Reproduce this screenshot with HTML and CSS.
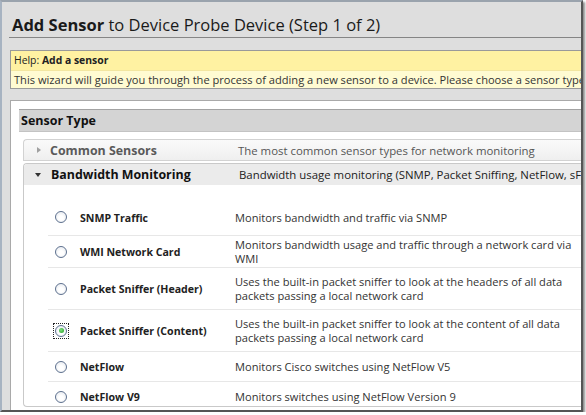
FILE: index.html
```html
<!DOCTYPE html>
<html>
<head>
<meta charset="utf-8">
<link rel="stylesheet" href="styles.css">
</head>
<body>
<div class="window">
  <div class="content">
    <h1 class="title"><b>Add Sensor</b> to Device Probe Device (Step 1 of 2)</h1>
    <div class="help">
      <div class="help-head">Help: <b>Add a sensor</b></div>
      <div class="help-body">This wizard will guide you through the process of adding a new sensor to a device. Please choose a sensor type from the list below.</div>
    </div>
    <div class="panel">
      <div class="panel-head">Sensor Type</div>
      <div class="group group-collapsed">
        <span class="arrow arrow-right"></span>
        <span class="group-name">Common Sensors</span>
        <span class="group-desc">The most common sensor types for network monitoring</span>
      </div>
      <div class="group-box">
        <div class="group group-open">
          <span class="arrow arrow-down"></span>
          <span class="group-name">Bandwidth Monitoring</span>
          <span class="group-desc">Bandwidth usage monitoring (SNMP, Packet Sniffing, NetFlow, sFlow)</span>
        </div>
        <div class="list">
          <div class="row row-first">
            <span class="radio"></span>
            <span class="name">SNMP Traffic</span>
            <span class="desc">Monitors bandwidth and traffic via SNMP</span>
          </div>
          <div class="row row-wmi">
            <span class="radio"></span>
            <span class="name">WMI Network Card</span>
            <span class="desc">Monitors bandwidth usage and traffic through a network card via WMI</span>
          </div>
          <div class="row row-two">
            <span class="radio"></span>
            <span class="name">Packet Sniffer (Header)</span>
            <span class="desc">Uses the built-in packet sniffer to look at the headers of all data packets passing a local network card</span>
          </div>
          <div class="row row-two">
            <span class="radio radio-checked"></span>
            <span class="name">Packet Sniffer (Content)</span>
            <span class="desc">Uses the built-in packet sniffer to look at the content of all data packets passing a local network card</span>
          </div>
          <div class="row">
            <span class="radio"></span>
            <span class="name">NetFlow</span>
            <span class="desc">Monitors Cisco switches using NetFlow V5</span>
          </div>
          <div class="row">
            <span class="radio"></span>
            <span class="name">NetFlow V9</span>
            <span class="desc">Monitors switches using NetFlow Version 9</span>
          </div>
        </div>
      </div>
    </div>
  </div>
</div>
</body>
</html>
```
FILE: styles.css
```css
html, body {
  margin: 0;
  padding: 0;
  background: #ffffff;
}
body {
  font-family: "Open Sans", "Noto Sans", sans-serif;
  color: #222;
}
.window {
  width: 579px;
  height: 408px;
  border-left: 2px solid #a7b3c1;
  border-top: 2px solid #9aa3ad;
  border-right: 2px solid #555;
  border-bottom: 2px solid #555;
  box-shadow: 2px 2px 2px rgba(0,0,0,0.45);
  background: #dedede;
  overflow: hidden;
}
.content {
  padding-left: 7px;
  width: 640px;
}
.title {
  margin: 0;
  padding: 11px 0 0 3px;
  height: 24px;
  line-height: 24px;
  font-size: 16.5px;
  font-weight: normal;
  color: #1a1a1a;
  border-bottom: 1px solid #858585;
  white-space: nowrap;
}
.title b {
  font-weight: 700;
}
.help {
  margin: 12px 0 0 1px;
  border: 1px solid #9a9a9a;
  white-space: nowrap;
}
.help-head {
  height: 19px;
  line-height: 19px;
  padding-left: 3px;
  font-size: 10.4px;
  background: #fff2a2;
  border-bottom: 1px solid #f3e6a0;
}
.help-body {
  height: 17px;
  line-height: 17px;
  padding-left: 3px;
  font-size: 11.1px;
  background: #fffbd2;
  color: #333;
}
.panel {
  margin: 11px 0 0 1px;
  border: 1px solid #a9a9a9;
  background: #fff;
  padding: 8px 0 0 8px;
  height: 400px;
}
.panel-head {
  height: 21px;
  line-height: 21px;
  border-top: 1px solid #a3a3a3;
  border-bottom: 1px solid #c3c3c3;
  background: #d4d4d4;
  padding-left: 2px;
  font-size: 12.5px;
  font-weight: 700;
  color: #111;
}
.group {
  display: flex;
  align-items: center;
  white-space: nowrap;
}
.group-collapsed {
  margin: 7px 0 0 4px;
  height: 20px;
  border: 1px solid #d2d2d2;
  border-right: none;
  border-radius: 4px 0 0 0;
  background: linear-gradient(#fafafa, #efefef);
}
.group-box {
  margin: 2px 0 0 4px;
  border: 1px solid #c9c9c9;
  border-right: none;
  border-radius: 4px 0 0 4px;
  overflow: hidden;
}
.group-open {
  height: 21px;
  background: #ebebeb;
}
.arrow {
  width: 0;
  height: 0;
  flex: none;
}
.arrow-right {
  margin-left: 13px;
  margin-right: 9px;
  border-top: 3.5px solid transparent;
  border-bottom: 3.5px solid transparent;
  border-left: 4px solid #a0a0a0;
}
.arrow-down {
  margin-left: 11px;
  margin-right: 10px;
  border-left: 3.5px solid transparent;
  border-right: 3.5px solid transparent;
  border-top: 4px solid #333;
}
.group-name {
  width: 188px;
  font-size: 12.4px;
  font-weight: 700;
  flex: none;
}
.group-collapsed .group-name {
  color: #5a5a5a;
}
.group-open .group-name {
  color: #111;
}
.group-desc {
  font-size: 11.4px;
  color: #555;
}
.group-open .group-desc {
  color: #222;
}
.list {
  overflow: hidden;
  padding-top: 12px;
  box-sizing: border-box;
  height: 221px;
}
.row {
  margin-left: 24px;
  height: 29px;
  border-bottom: 1px solid #e7e7e7;
  display: flex;
  align-items: center;
}
.row-first {
  height: 39px;
  align-items: flex-start;
  padding-top: 14px;
  box-sizing: border-box;
}
.row-wmi {
  height: 31px;
}
.row-two {
  height: 41px;
}
.radio {
  flex: none;
  position: relative;
  width: 12px;
  height: 12px;
  margin-left: 7px;
  margin-right: 13px;
  border-radius: 50%;
  border: 1px solid #5d708e;
  box-sizing: border-box;
  background: radial-gradient(circle at 50% 60%, #ffffff 0 30%, #dfe3ea 100%);
  box-shadow: inset 0 0 0 1px #f2f4f7;
}
.radio-checked::before {
  content: "";
  position: absolute;
  left: 2.5px;
  top: 2.5px;
  width: 5px;
  height: 5px;
  border-radius: 50%;
  background: radial-gradient(circle at 40% 40%, #7ee07e, #1f9a1f);
}
.radio-checked::after {
  content: "";
  position: absolute;
  left: -3px;
  top: -3px;
  width: 16px;
  height: 16px;
  border: 1px dotted #222;
  box-sizing: border-box;
}
.name {
  flex: none;
  width: 155px;
  font-size: 10.6px;
  font-weight: 700;
  color: #222;
}
.desc {
  width: 345px;
  font-size: 11.1px;
  line-height: 14px;
  color: #333;
}
```
